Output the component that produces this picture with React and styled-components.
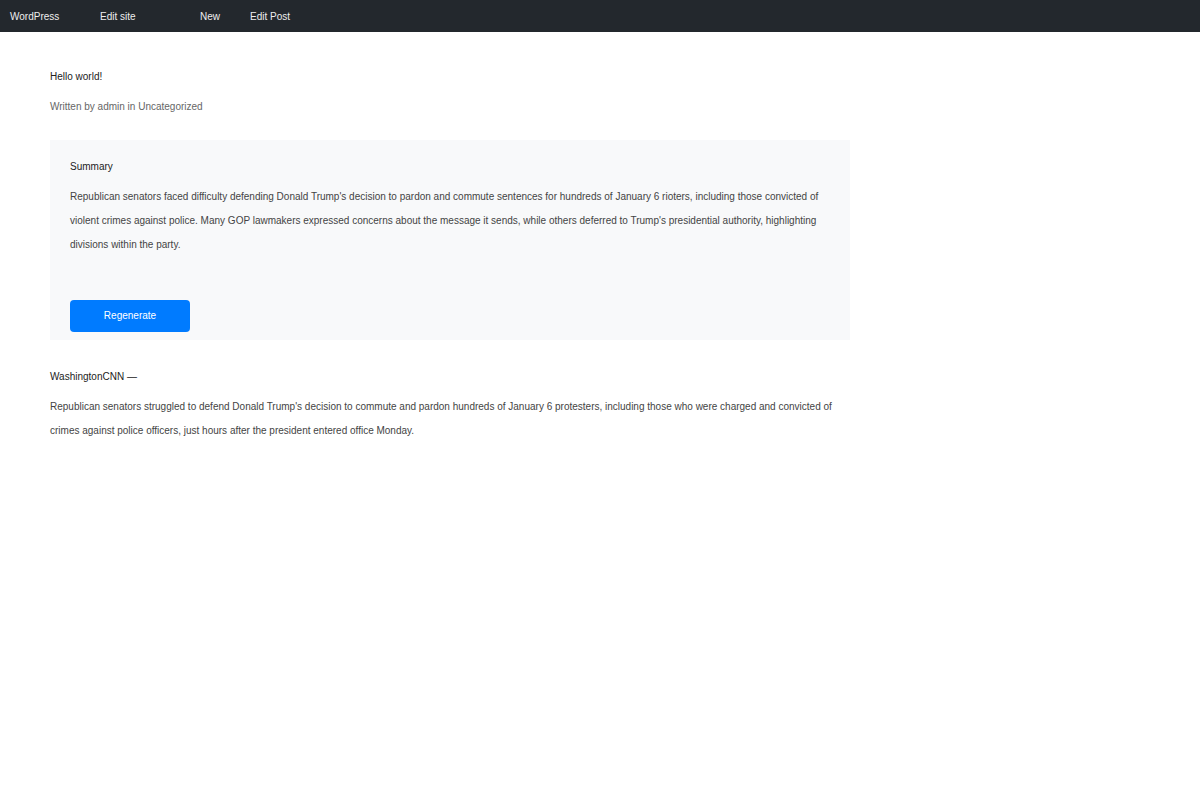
import React from "react";
import styled, { createGlobalStyle } from "styled-components";

const Global = createGlobalStyle`
  html, body { margin: 0; padding: 0; background: #fff; }
  body { font-family: "Liberation Sans", Arial, Helvetica, sans-serif; font-size: 10px; }
  * { box-sizing: border-box; }
`;

const AdminBar = styled.nav`
  height: 32px;
  background: #23282d;
  display: flex;
  align-items: center;
  padding: 1px 0 0 10px;
`;

const BarItem = styled.a`
  color: #eeeeee;
  font-size: 10px;
  line-height: 30px;
  text-decoration: none;
  width: ${(p) => p.$w || "auto"};
  flex: none;
`;

const Main = styled.main`
  padding: 35px 50px 0;
  width: 900px;
`;

const Title = styled.h1`
  margin: 0;
  font-size: 10px;
  font-weight: normal;
  line-height: 20px;
  color: #222;
`;

const Meta = styled.div`
  margin-top: 10px;
  line-height: 20px;
  color: #666;
  font-size: 10px;
`;

const SummaryBox = styled.section`
  margin-top: 23px;
  width: 800px;
  height: 200px;
  background: #f8f9fa;
  padding: 21px 20px 7px;
`;

const SummaryTitle = styled.h2`
  margin: 0;
  font-size: 10px;
  font-weight: normal;
  line-height: 12px;
  color: #222;
`;

const Paragraph = styled.p`
  margin: ${(p) => p.$m || "0"};
  font-size: 10px;
  line-height: 24px;
  color: #444;
`;

const Button = styled.button`
  margin-top: 43px;
  width: 120px;
  height: 32px;
  padding: 0 0 2px;
  border: none;
  border-radius: 4px;
  background: #007bff;
  color: #fff;
  font-family: "Liberation Sans", Arial, sans-serif;
  font-size: 10px;
  cursor: pointer;
  display: block;
`;

const Dateline = styled.div`
  margin-top: 25px;
  line-height: 24px;
  color: #222;
  font-size: 10px;
`;

export default function App() {
  return (
    <>
      <Global />
      <AdminBar>
        <BarItem $w="90px">WordPress</BarItem>
        <BarItem $w="100px">Edit site</BarItem>
        <BarItem $w="50px">New</BarItem>
        <BarItem>Edit Post</BarItem>
      </AdminBar>
      <Main>
        <Title>Hello world!</Title>
        <Meta>Written by admin in Uncategorized</Meta>
        <SummaryBox>
          <SummaryTitle>Summary</SummaryTitle>
          <Paragraph $m="12px 0 0">
            Republican senators faced difficulty defending Donald Trump's decision to pardon and commute sentences for hundreds of January 6 rioters, including those convicted of violent crimes against police. Many GOP lawmakers expressed concerns about the message it sends, while others deferred to Trump's presidential authority, highlighting divisions within the party.
          </Paragraph>
          <Button>Regenerate</Button>
        </SummaryBox>
        <Dateline>WashingtonCNN —</Dateline>
        <Paragraph $m="6px 0 0">
          Republican senators struggled to defend Donald Trump's decision to commute and pardon hundreds of January 6 protesters, including those who were charged and convicted of crimes against police officers, just hours after the president entered office Monday.
        </Paragraph>
      </Main>
    </>
  );
}
